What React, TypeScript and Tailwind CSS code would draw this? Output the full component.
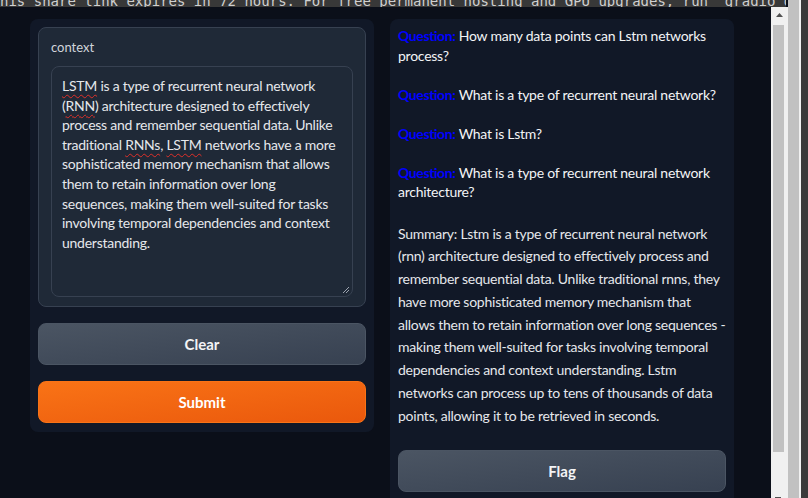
import React from "react";

const sans = { fontFamily: "Lato, 'Noto Sans', sans-serif" };

function Squiggle({ children }: { children: React.ReactNode }) {
  return (
    <span className="underline decoration-wavy decoration-[#e0302a] decoration-1 underline-offset-[3px]">
      {children}
    </span>
  );
}

function Btn({ label, primary }: { label: string; primary?: boolean }) {
  return (
    <button
      className={
        primary
          ? "h-[42px] w-full rounded-lg border border-[#f97316] bg-gradient-to-br from-[#f97316] to-[#ea580c] text-[15px] font-bold text-white"
          : "h-[42px] w-full rounded-lg border border-[#4b5563] bg-gradient-to-br from-[#4b5563] to-[#374151] text-[15px] font-bold text-[#f3f4f6]"
      }
    >
      {label}
    </button>
  );
}

const Q = ({ text }: { text: string }) => (
  <>
    <span className="font-bold tracking-[-0.4px] text-[#0000ff]">Question:</span> {text}
  </>
);

export default function App() {
  const summary = [
    "Summary: Lstm is a type of recurrent neural network",
    "(rnn) architecture designed to effectively process and",
    "remember sequential data. Unlike traditional rnns, they",
    "have more sophisticated memory mechanism that",
    "allows them to retain information over long sequences -",
    "making them well-suited for tasks involving temporal",
    "dependencies and context understanding. Lstm",
    "networks can process up to tens of thousands of data",
    "points, allowing it to be retrieved in seconds.",
  ];

  return (
    <div className="relative flex h-[498px] w-[808px] overflow-hidden bg-[#0b0f19]" style={sans}>
      {/* colab output frame */}
      <div className="flex w-[788px] flex-col">
        <div className="h-[7px] w-[786px] overflow-hidden bg-[#383838]">
          <div
            className="-mt-[9px] whitespace-nowrap text-[14px] text-[#cfcfcf]"
            style={{ fontFamily: "'DejaVu Sans Mono', monospace" }}
          >
            his share link expires in 72 hours. For free permanent hosting and GPU upgrades, run `gradio deploy`
          </div>
        </div>
        <div className="flex min-h-0 flex-1">
          <div className="flex w-[771px] gap-[16px] pl-[30px] pt-[12px]">
            {/* left column */}
            <div className="flex h-[413px] w-[344px] flex-col gap-[16px] rounded-lg bg-[#111827] p-[8px]">
              <div className="h-[280px] rounded-lg border border-[#374151] bg-[#1f2937] px-[12px] pb-[10px] pt-[11px]">
                <div className="h-[16px] text-[13px] leading-[16px] text-[#d1d5db]">context</div>
                <div className="relative mt-[11px] h-[231px] rounded-lg border border-[#374151] bg-[#1f2937] px-[10px] pt-[9px] text-[14px] leading-[19.6px] tracking-[-0.25px] text-[#e5e7eb]">
                  <div className="whitespace-nowrap">
                    <Squiggle>LSTM</Squiggle> is a type of recurrent neural network
                    <br />(<Squiggle>RNN</Squiggle>) architecture designed to effectively
                    <br />process and remember sequential data. Unlike
                    <br />traditional <Squiggle>RNNs</Squiggle>, <Squiggle>LSTM</Squiggle> networks have a more
                    <br />sophisticated memory mechanism that allows
                    <br />them to retain information over long
                    <br />sequences, making them well-suited for tasks
                    <br />involving temporal dependencies and context
                    <br />understanding.
                  </div>
                  <svg className="absolute bottom-[2px] right-[2px]" width="8" height="8" viewBox="0 0 8 8">
                    <path d="M7 1L1 7M7 4L4 7" stroke="#9ca3af" strokeWidth="1" />
                  </svg>
                </div>
              </div>
              <Btn label="Clear" />
              <Btn label="Submit" primary />
            </div>

            {/* right column */}
            <div className="flex h-[500px] w-[344px] flex-col rounded-lg bg-[#111827] px-[8px] pt-[7px]">
              <div className="whitespace-nowrap text-[14px] leading-[19.5px] tracking-[-0.25px] text-[#f3f4f6]">
                <Q text="How many data points can Lstm networks" />
                <br />process?
                <br />
                <br />
                <Q text="What is a type of recurrent neural network?" />
                <br />
                <br />
                <Q text="What is Lstm?" />
                <br />
                <br />
                <Q text="What is a type of recurrent neural network" />
                <br />architecture?
              </div>
              <div className="mt-[21px] whitespace-nowrap text-[14px] leading-[22.75px] tracking-[-0.25px] text-[#e5e7eb]">
                {summary.map((l) => (
                  <div key={l}>{l}</div>
                ))}
              </div>
              <div className="mt-[23px]">
                <Btn label="Flag" />
              </div>
            </div>
          </div>

          {/* inner scrollbar */}
          <div className="relative w-[17px] bg-[#f0f0f0]">
            <svg className="absolute left-[4px] top-[5px]" width="9" height="6" viewBox="0 0 9 6">
              <path d="M4.5 1L8 5H1z" fill="#505050" />
            </svg>
            <div className="absolute left-[2px] top-[18px] h-[427px] w-[11px] bg-[#c1c1c1]" />
            <div className="absolute bottom-0 left-[4px] h-[1px] w-[6px] bg-[#505050]" />
          </div>
        </div>
      </div>

      {/* outer scrollbar */}
      <div className="w-[11px] bg-[#c1c1c1]" />
      <div className="w-[2px] bg-[#f0f0f0]" />
      <div className="flex-1 bg-[#3a3a3a]" />
    </div>
  );
}
